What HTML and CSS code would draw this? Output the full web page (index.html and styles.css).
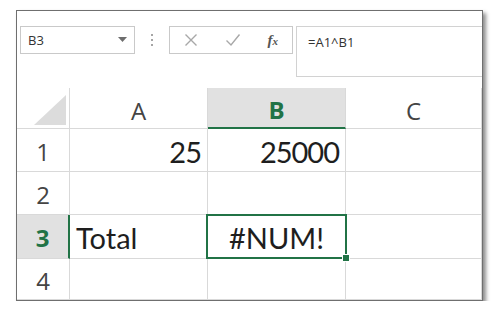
FILE: index.html
```html
<!DOCTYPE html>
<html>
  <head>
    <meta charset="UTF-8" />
    <title>#NUM! error</title>
    <link rel="stylesheet" href="styles.css">
  </head>
  <body>
    <div class="frame">
      <!-- formula bar -->
      <div class="formula-bar">
        <div class="name-box">
          <span>B3</span>
          <svg class="drop" width="9" height="5" viewBox="0 0 9 5"><path d="M0 0 H9 L4.5 5 Z" fill="#6d6d6d" /></svg>
        </div>
        <div class="grip"><i></i><i></i><i></i></div>
        <div class="buttons">
          <svg width="14" height="14" viewBox="0 0 14 14"><path d="M1.5 1.5 L12.5 12.5 M12.5 1.5 L1.5 12.5" stroke="#a8a8a8" stroke-width="1.4" fill="none" /></svg>
          <svg width="16" height="14" viewBox="0 0 16 14"><path d="M1.5 7.5 L6 12 L14.5 1.5" stroke="#a8a8a8" stroke-width="1.4" fill="none" /></svg>
          <span class="fx">f<small>x</small></span>
        </div>
        <div class="formula">=A1^B1</div>
      </div>

      <!-- sheet -->
      <div class="sheet">
        <div class="corner"><span class="tri"></span></div>
        <div class="col-head">A</div>
        <div class="col-head active">B</div>
        <div class="col-head">C</div>

        <div class="row-head">1</div>
        <div class="cell num">25</div>
        <div class="cell num">25000</div>
        <div class="cell"></div>

        <div class="row-head">2</div>
        <div class="cell"></div>
        <div class="cell"></div>
        <div class="cell"></div>

        <div class="row-head active">3</div>
        <div class="cell">Total</div>
        <div class="cell err selected">#NUM!</div>
        <div class="cell"></div>

        <div class="row-head">4</div>
        <div class="cell"></div>
        <div class="cell"></div>
        <div class="cell"></div>
      </div>
    </div>
  </body>
</html>
```

FILE: styles.css
```css
body {
  margin: 0;
  padding: 10px 0 0 16px;
  background: #fff;
  font-family: "Open Sans", "Noto Sans", sans-serif;
}
.frame {
  box-sizing: border-box;
  width: 467px;
  height: 291px;
  border: 1px solid #6f6f6f;
  box-shadow: 3px 3px 4px rgba(0, 0, 0, 0.45);
  background: #fff;
  overflow: hidden;
  display: flex;
  flex-direction: column;
}

/* formula bar */
.formula-bar {
  height: 77px;
  flex: none;
  display: flex;
  align-items: flex-start;
  padding: 15px 0 0 3px;
  box-sizing: border-box;
}
.name-box {
  box-sizing: border-box;
  width: 115px;
  height: 28px;
  border: 1px solid #c9c9c9;
  display: flex;
  align-items: center;
  justify-content: space-between;
  padding: 0 7px 0 7px;
  font-size: 13px;
  color: #333;
}
.drop {
  margin-top: -2px;
}
.grip {
  width: 34px;
  height: 28px;
  display: flex;
  flex-direction: column;
  align-items: center;
  justify-content: center;
  gap: 3px;
}
.grip i {
  width: 2px;
  height: 2px;
  background: #a5a5a5;
}
.buttons {
  box-sizing: border-box;
  width: 124px;
  height: 28px;
  border: 1px solid #c9c9c9;
  display: flex;
  align-items: center;
  justify-content: space-between;
  padding: 0 14px 0 14px;
}
.fx {
  font-family: "Liberation Serif", serif;
  font-style: italic;
  font-weight: bold;
  font-size: 15px;
  color: #555;
}
.fx small {
  font-size: 11px;
}
.formula {
  box-sizing: border-box;
  flex: 1;
  height: 51px;
  margin-left: 3px;
  border: 1px solid #d2d2d2;
  border-right: none;
  padding: 6px 0 0 11px;
  font-size: 13px;
  color: #333;
}

/* sheet */
.sheet {
  flex: 1;
  display: grid;
  grid-template-columns: 53px 138px 138px 1fr;
  grid-template-rows: 41px 43px 43px 44px 1fr;
}
.sheet > div {
  box-sizing: border-box;
  border-right: 1px solid #d9d9d9;
  border-bottom: 1px solid #d9d9d9;
  display: flex;
  align-items: center;
}
.corner {
  justify-content: flex-end;
  align-items: flex-end !important;
  padding: 0 3px 3px 0;
}
.tri {
  width: 0;
  height: 0;
  border-left: 32px solid transparent;
  border-bottom: 30px solid #dcdcdc;
}
.col-head {
  justify-content: center;
  font-size: 24px;
  color: #444;
  padding-top: 4px;
}
.row-head {
  justify-content: center;
  font-size: 24px;
  color: #444;
  padding-top: 2px;
}
.col-head.active {
  background: #e1e1e1;
  color: #217346;
  font-weight: bold;
  border-bottom: 2px solid #217346;
}
.row-head.active {
  background: #e1e1e1;
  color: #217346;
  font-weight: bold;
  border-right: 2px solid #217346;
}
.cell {
  font-family: Lato, "Liberation Sans", sans-serif;
  font-size: 29px;
  color: #1e1e1e;
  padding: 2px 6px 0 6px;
}
.cell.num {
  justify-content: flex-end;
  letter-spacing: -1px;
}
.cell.err {
  justify-content: center;
}
.selected {
  position: relative;
}
.selected::after {
  content: "";
  position: absolute;
  top: -1px;
  left: -2px;
  right: -2px;
  bottom: -1px;
  border: 2px solid #217346;
}
.selected::before {
  content: "";
  position: absolute;
  right: -5px;
  bottom: -4px;
  width: 6px;
  height: 6px;
  background: #217346;
  border: 1px solid #fff;
  z-index: 1;
}
```
